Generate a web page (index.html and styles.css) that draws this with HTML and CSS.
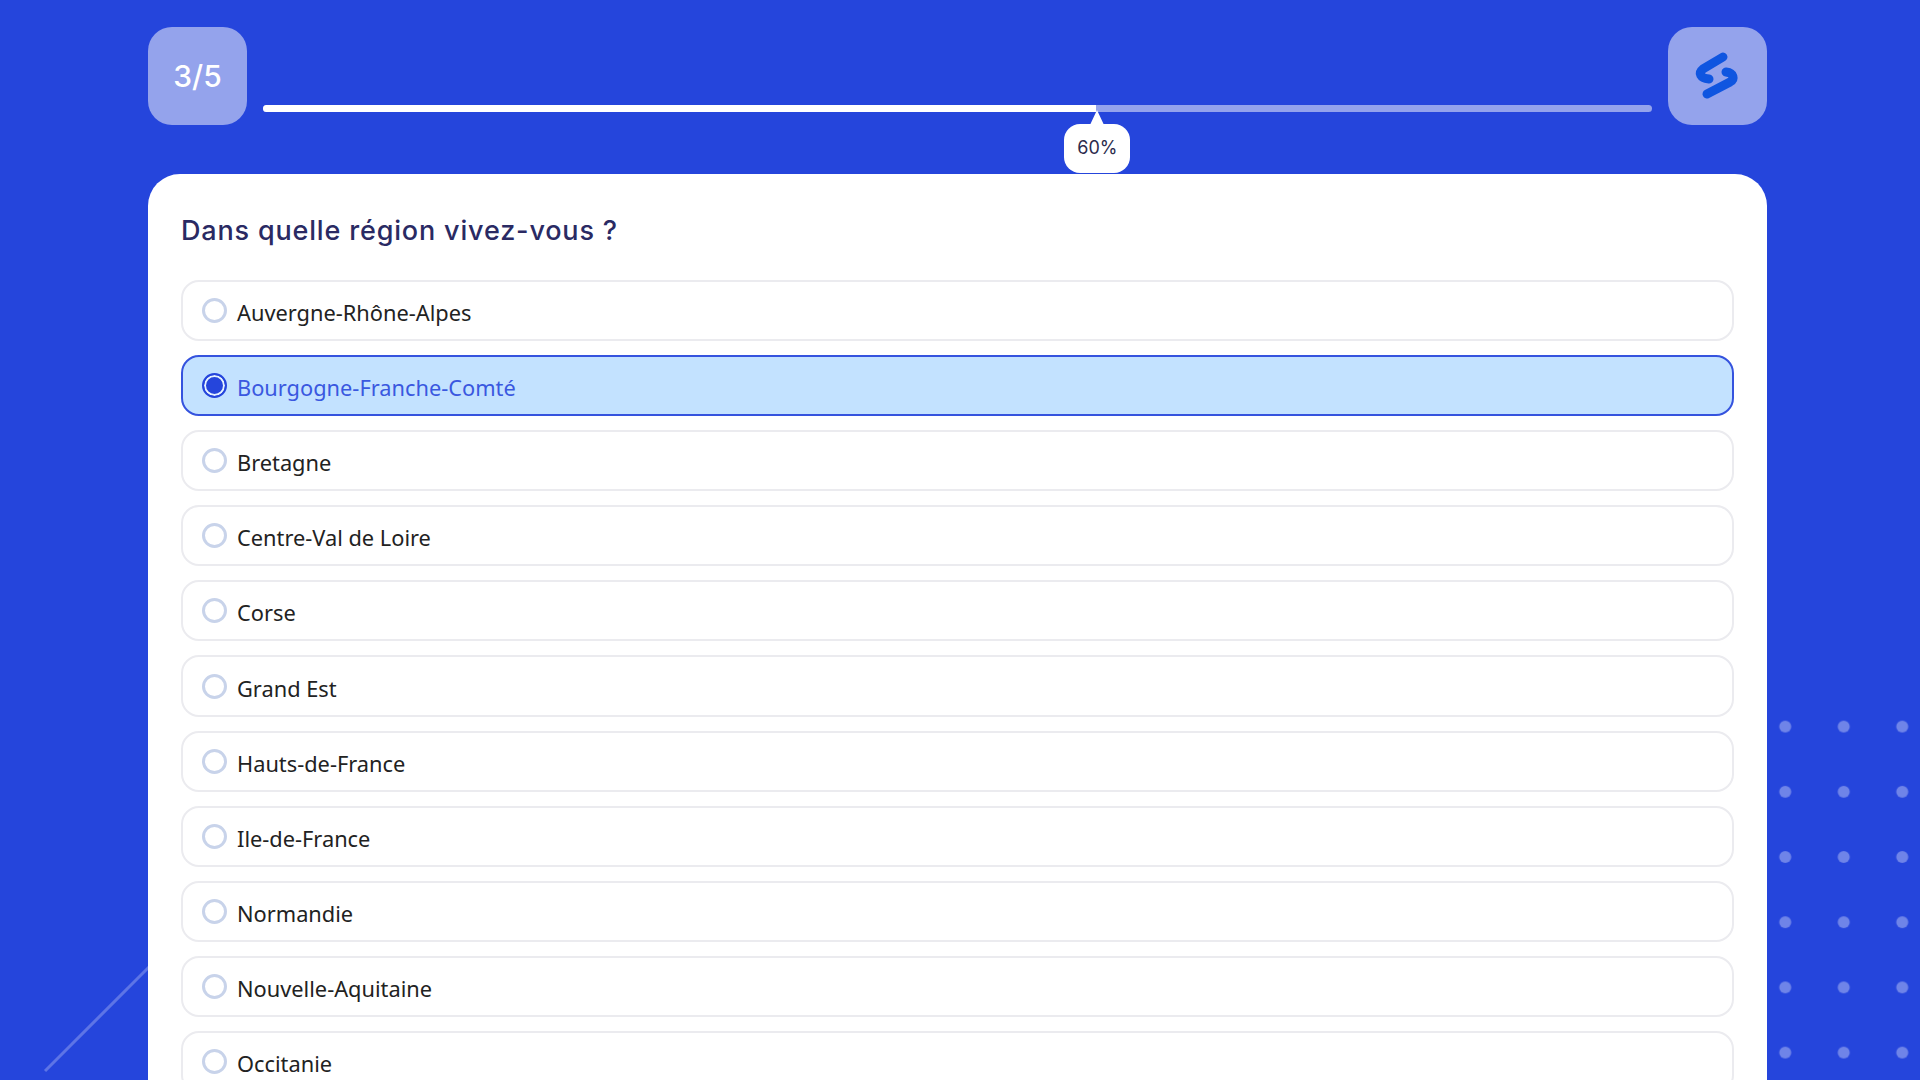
FILE: index.html
```html
<!DOCTYPE html>
<html lang="fr">
<head>
<meta charset="utf-8">
<title>Dans quelle région vivez-vous ?</title>
<link rel="stylesheet" href="styles.css">
</head>
<body>
<svg class="deco" width="1920" height="1080" viewBox="0 0 1920 1080" aria-hidden="true">
  <defs>
    <pattern id="dots" x="1756" y="694" width="58.5" height="65.2" patternUnits="userSpaceOnUse">
      <circle cx="29.25" cy="32.6" r="6" fill="#6f84e8"/>
    </pattern>
  </defs>
  <rect x="1756" y="694" width="164" height="386" fill="url(#dots)"/>
  <line x1="45" y1="1071" x2="160" y2="956" stroke="#5d74e6" stroke-width="3"/>
</svg>
<main class="page">
  <header class="top">
    <div class="tile tile-count">3/5</div>
    <div class="progress">
      <div class="track"><div class="fill" style="width:60%"></div></div>
      <div class="bubble" style="left:60%">60%</div>
    </div>
    <div class="tile">
      <svg width="56" height="56" viewBox="0 0 56 56" aria-hidden="true">
        <path class="logo" d="M33 9 L13 21 C8 25 10 30 19 31"/>
        <path class="logo" d="M36 24 C44 25 45 31 40 34 L17 46"/>
      </svg>
    </div>
  </header>
  <section class="card">
    <h1 class="title">Dans quelle région vivez-vous ?</h1>
    <div class="options">
      <div class="option"><span class="radio"></span><span class="label">Auvergne-Rhône-Alpes</span></div>
      <div class="option selected"><span class="radio"></span><span class="label">Bourgogne-Franche-Comté</span></div>
      <div class="option"><span class="radio"></span><span class="label">Bretagne</span></div>
      <div class="option"><span class="radio"></span><span class="label">Centre-Val de Loire</span></div>
      <div class="option"><span class="radio"></span><span class="label">Corse</span></div>
      <div class="option"><span class="radio"></span><span class="label">Grand Est</span></div>
      <div class="option"><span class="radio"></span><span class="label">Hauts-de-France</span></div>
      <div class="option"><span class="radio"></span><span class="label">Ile-de-France</span></div>
      <div class="option"><span class="radio"></span><span class="label">Normandie</span></div>
      <div class="option"><span class="radio"></span><span class="label">Nouvelle-Aquitaine</span></div>
      <div class="option"><span class="radio"></span><span class="label">Occitanie</span></div>
    </div>
  </section>
</main>
</body>
</html>
```

FILE: styles.css
```css
* { box-sizing: border-box; }
html, body { margin: 0; height: 100%; }
body {
  background: #2545dc;
  overflow: hidden;
  font-family: "Noto Sans", "Open Sans", sans-serif;
  color: #222;
}
.deco { position: absolute; left: 0; top: 0; }
.page {
  position: relative;
  height: 1080px;
  padding: 27px 153px 0 148px;
}
.top {
  display: flex;
  gap: 16px;
  height: 98px;
}
.tile {
  flex: none;
  width: 99px;
  height: 98px;
  border-radius: 24px;
  background: #94a3ec;
  display: flex;
  align-items: center;
  justify-content: center;
}
.tile-count {
  color: #fff;
  font-family: "Inter", sans-serif;
  font-size: 30px;
  font-weight: 500;
}
.logo {
  fill: none;
  stroke: #0f55e0;
  stroke-width: 9;
  stroke-linecap: round;
}
.progress {
  position: relative;
  flex: 1;
  padding-top: 78px;
}
.track {
  height: 7px;
  border-radius: 3.5px;
  background: #94a3ec;
  overflow: hidden;
}
.fill {
  height: 100%;
  background: #fff;
}
.bubble {
  position: absolute;
  top: 97px;
  margin-left: 1px;
  transform: translateX(-50%);
  width: 66px;
  height: 49px;
  border-radius: 16px;
  background: #fff;
  color: #2b2b4d;
  font-family: "Inter", sans-serif;
  font-size: 18px;
  padding-bottom: 2px;
  display: flex;
  align-items: center;
  justify-content: center;
}
.bubble::before {
  content: "";
  position: absolute;
  left: 50%;
  top: -14px;
  margin-left: -7px;
  border-left: 7px solid transparent;
  border-right: 7px solid transparent;
  border-bottom: 15px solid #fff;
}
.card {
  margin-top: 49px;
  width: 1619px;
  height: 1000px;
  padding: 40px 33px 0;
  background: #fff;
  border-radius: 32px 32px 0 0;
}
.title {
  margin: 0 0 31.5px;
  font-family: "Inter", sans-serif;
  font-size: 27px;
  line-height: 34px;
  font-weight: 500;
  letter-spacing: 0.83px;
  color: #2a2a63;
}
.options {
  display: flex;
  flex-direction: column;
  gap: 14px;
}
.option {
  flex: none;
  height: 61.2px;
  display: flex;
  align-items: center;
  gap: 10px;
  padding-left: 19px;
  border: 2px solid #ebebef;
  border-radius: 18px;
  background: #fff;
}
.radio {
  flex: none;
  width: 25px;
  height: 25px;
  border-radius: 50%;
  border: 3px solid #c8d3ea;
  background: #fff;
}
.label {
  padding-top: 4px;
  font-size: 21.8px;
  color: #222;
}
.option.selected {
  background: #c3e2ff;
  border: 2px solid #3553de;
}
.selected .radio {
  border: 2px solid #2545dc;
  background: #2545dc;
  box-shadow: inset 0 0 0 2px #e6f2ff;
}
.selected .label { color: #3a58e0; }
```
